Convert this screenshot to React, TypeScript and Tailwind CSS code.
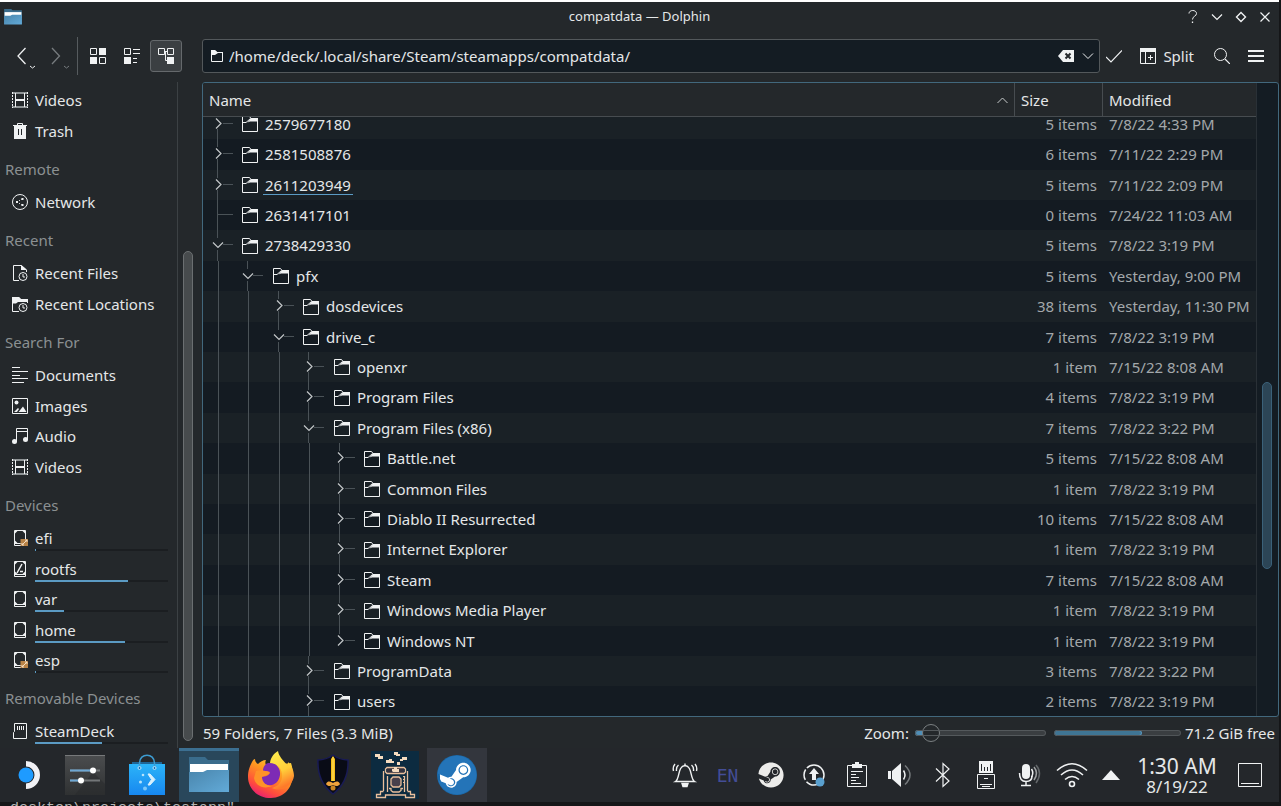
import { useLayoutEffect, useRef, type ReactNode } from "react";
import { FaSteam } from "react-icons/fa";

type Row = {
  name: string;
  level: number;
  state: "closed" | "open" | "leaf";
  size: string;
  modified: string;
  hovered?: boolean;
  last?: boolean;
};

const rows: Row[] = [
  { name: "2579677180", level: 0, state: "closed", size: "5 items", modified: "7/8/22 4:33 PM" },
  { name: "2581508876", level: 0, state: "closed", size: "6 items", modified: "7/11/22 2:29 PM" },
  { name: "2611203949", level: 0, state: "closed", size: "5 items", modified: "7/11/22 2:09 PM", hovered: true },
  { name: "2631417101", level: 0, state: "leaf", size: "0 items", modified: "7/24/22 11:03 AM" },
  { name: "2738429330", level: 0, state: "open", size: "5 items", modified: "7/8/22 3:19 PM" },
  { name: "pfx", level: 1, state: "open", size: "5 items", modified: "Yesterday, 9:00 PM" },
  { name: "dosdevices", level: 2, state: "closed", size: "38 items", modified: "Yesterday, 11:30 PM" },
  { name: "drive_c", level: 2, state: "open", size: "7 items", modified: "7/8/22 3:19 PM" },
  { name: "openxr", level: 3, state: "closed", size: "1 item", modified: "7/15/22 8:08 AM" },
  { name: "Program Files", level: 3, state: "closed", size: "4 items", modified: "7/8/22 3:19 PM" },
  { name: "Program Files (x86)", level: 3, state: "open", size: "7 items", modified: "7/8/22 3:22 PM" },
  { name: "Battle.net", level: 4, state: "closed", size: "5 items", modified: "7/15/22 8:08 AM" },
  { name: "Common Files", level: 4, state: "closed", size: "1 item", modified: "7/8/22 3:19 PM" },
  { name: "Diablo II Resurrected", level: 4, state: "closed", size: "10 items", modified: "7/15/22 8:08 AM" },
  { name: "Internet Explorer", level: 4, state: "closed", size: "1 item", modified: "7/8/22 3:19 PM" },
  { name: "Steam", level: 4, state: "closed", size: "7 items", modified: "7/15/22 8:08 AM" },
  { name: "Windows Media Player", level: 4, state: "closed", size: "1 item", modified: "7/8/22 3:19 PM" },
  { name: "Windows NT", level: 4, state: "closed", size: "1 item", modified: "7/8/22 3:19 PM", last: true },
  { name: "ProgramData", level: 3, state: "closed", size: "3 items", modified: "7/8/22 3:22 PM" },
  { name: "users", level: 3, state: "closed", size: "2 items", modified: "7/8/22 3:19 PM" },
];

/* ---------- small line icons ---------- */

function Icon({ children, size = 16 }: { children: ReactNode; size?: number }) {
  return (
    <svg width={size} height={size} viewBox={`0 0 ${size} ${size}`} fill="none" stroke="#f0f2f3" className="shrink-0" aria-hidden="true">
      {children}
    </svg>
  );
}

const FolderIcon = () => (
  <Icon>
    <path d="M.5 .5H7.5L9 2.5H15.500V15.500H.5Z" />
    <path d="M.5 6.500H4L8.500 2.500" />
    <path d="M9 2H16V5.500H8L5.500 6.500Z" fill="#f0f2f3" stroke="none" />
  </Icon>
);

const FilmIcon = () => (
  <Icon>
    <path d="M0 1H16M0 15H16" stroke="#8f9496" strokeWidth="2" />
    <path d="M.5 0V16M15.500 0V16" strokeDasharray="2 1" strokeWidth="1" />
    <path d="M3.500 1V15M12.500 1V15" />
    <path d="M3 8H13" strokeWidth="2" />
  </Icon>
);

const TrashIcon = () => (
  <Icon>
    <path d="M5.500 2.500V.5H10.500V2.500M1 2.500H15" />
    <path d="M2 3H14V16H2Z" fill="#f0f2f3" stroke="none" />
    <path d="M6.500 6V12M9.500 6V12" stroke="#24282b" />
  </Icon>
);

const NetworkIcon = () => (
  <Icon>
    <circle cx="8" cy="8" r="7.500" />
    <path d="M5 8L10 5M5 8L10 11" strokeDasharray="1 1.500" />
    <path d="M4 7h2v2H4zM9.500 4h2v2h-2zM9.500 10h2v2h-2z" fill="#f0f2f3" stroke="none" />
  </Icon>
);

const Clock = () => (
  <>
    <circle cx="11" cy="11.500" r="4" fill="#24282b" />
    <path d="M11 9V12H13" />
  </>
);

const RecentFilesIcon = () => (
  <Icon>
    <path d="M7 15.500H1.500V.5H9.500L14.500 5V7" />
    <path d="M9 0L15 5H9Z" fill="#f0f2f3" stroke="none" />
    <Clock />
  </Icon>
);

const RecentLocationsIcon = () => (
  <Icon>
    <path d="M7 15.500H.5V1.500H7L8.500 3.500H15.500V7" />
    <path d="M0 1H7L9 3H16V6H6L4 7.500H0Z" fill="#f0f2f3" stroke="none" />
    <Clock />
  </Icon>
);

const DocumentsIcon = () => (
  <Icon>
    <path d="M0 .5H8M0 4.500H16M0 8.500H8M0 11.500H16M0 15.500H12" />
  </Icon>
);

const ImagesIcon = () => (
  <Icon>
    <path d="M.5 .5H15.500V15.500H.5Z" />
    <circle cx="4.500" cy="4.500" r="2" fill="#f0f2f3" stroke="none" />
    <path d="M2 14L6 10L7 11L5 14ZM6.500 14L11 8.500L14.500 14Z" fill="#f0f2f3" stroke="none" />
  </Icon>
);

const AudioIcon = () => (
  <Icon>
    <path d="M4.500 14V.5H15.500V12M4.500 3.500H15.500" />
    <circle cx="2.500" cy="13.500" r="2.500" fill="#f0f2f3" stroke="none" />
    <circle cx="13.500" cy="11.500" r="2.500" fill="#f0f2f3" stroke="none" />
  </Icon>
);

function DriveIcon({ kind }: { kind?: "efi" | "root" }) {
  return (
    <Icon>
      <path d="M2.500 .5H13.500V15.500H2.500Z" />
      <path d="M3 13.500H13" />
      <path d="M3 1h2.500L3 3.500zM13 1h-2.500l2.500 2.500zM3 13h2.500l-2.500-2.500zM13 13h-2.500l2.500-2.500z" fill="#f0f2f3" stroke="none" />
      <path d="M6 14.500H10" stroke="#24282b" />
      {kind === "root" && <path d="M5 12L10 3M8 10.500H11" strokeWidth="1.500" />}
      {kind === "efi" && (
        <>
          <path d="M8.500 9H16V16H8.500Z" fill="#b98347" stroke="none" />
          <path d="M10 15L15 10M13 10h2v2M10 13v2h2" stroke="#f3ddc2" />
        </>
      )}
    </Icon>
  );
}

const SdIcon = () => (
  <Icon>
    <path d="M2.500 .5H14.500V15.500H1.500V9.500L2.500 8.500Z" />
    <path d="M5.500 3V7M7.500 3V7M9.500 3V7M11.500 3V7" />
  </Icon>
);

/* ---------- places sidebar ---------- */

type Place = { label: string; icon: ReactNode; used?: number };

const places: { title?: string; items: Place[] }[] = [
  { items: [{ label: "Videos", icon: <FilmIcon /> }, { label: "Trash", icon: <TrashIcon /> }] },
  { title: "Remote", items: [{ label: "Network", icon: <NetworkIcon /> }] },
  {
    title: "Recent",
    items: [
      { label: "Recent Files", icon: <RecentFilesIcon /> },
      { label: "Recent Locations", icon: <RecentLocationsIcon /> },
    ],
  },
  {
    title: "Search For",
    items: [
      { label: "Documents", icon: <DocumentsIcon /> },
      { label: "Images", icon: <ImagesIcon /> },
      { label: "Audio", icon: <AudioIcon /> },
      { label: "Videos", icon: <FilmIcon /> },
    ],
  },
  {
    title: "Devices",
    items: [
      { label: "efi", icon: <DriveIcon kind="efi" />, used: 1 },
      { label: "rootfs", icon: <DriveIcon kind="root" />, used: 70 },
      { label: "var", icon: <DriveIcon />, used: 22 },
      { label: "home", icon: <DriveIcon />, used: 68 },
      { label: "esp", icon: <DriveIcon kind="efi" />, used: 1 },
    ],
  },
  { title: "Removable Devices", items: [{ label: "SteamDeck", icon: <SdIcon />, used: 50 }] },
];

function Sidebar() {
  return (
    <aside className="flex w-[202px] shrink-0 overflow-hidden">
      <nav className="min-w-0 flex-1 border-r border-[#3c4144] pt-[3px]" aria-label="Places">
        {places.map((group, g) => (
          <section key={g}>
            {group.title && (
              <h2 className="flex h-[41px] items-center pt-[6px] pl-[5px] text-[15px] text-[#8b9092]">{group.title}</h2>
            )}
            <ul>
              {group.items.map((p, i) => (
                <li key={p.label} className={i % 2 ? "h-[31px]" : "h-[30px]"}>
                  <a href={`#${p.label}`} className="relative flex h-full items-center gap-[7px] pl-3">
                    {p.icon}
                    <span className="leading-5">{p.label}</span>
                    {p.used !== undefined && (
                      <span className="absolute right-[9px] bottom-[2px] left-[35px] h-[2px] bg-[#1b1e21]">
                        <span className="block h-full bg-[#5b9bc4]" style={{ width: `${p.used}%` }} />
                      </span>
                    )}
                  </a>
                </li>
              ))}
            </ul>
          </section>
        ))}
      </nav>
      <div className="flex w-6 shrink-0 flex-col pb-[7px] pl-[5px]">
        <div className="flex-[170] shrink-0" />
        <div className="w-[10px] flex-[489] rounded-full border border-[#6b6f71] bg-[#474b4d]" />
      </div>
    </aside>
  );
}

/* ---------- file list ---------- */

const cellWidths = ["w-[30px]", "w-[31px]", "w-[30px]", "w-[31px]", "w-[30px]"];

function TreeCell({ depth, row }: { depth: number; row: Row }) {
  const own = depth === row.level;
  return (
    <svg className={`h-full shrink-0 ${cellWidths[depth]}`} fill="none" stroke="#4a5257" aria-hidden="true">
      {!own && <path d="M15.500 -1V32" />}
      {own && (
        <>
          <path d={row.state === "leaf" ? "M14.500 -1V32M15 14.500H30" : "M14.500 -1V8"} />
          {row.state !== "leaf" && <path d={row.last ? "M20 14.500H30" : "M14.500 20V32M20 14.500H30"} />}
          {row.state === "closed" && <path d="M13 9.500L18 14.500L13 19.500" stroke="#c3c7c9" strokeWidth="1.200" />}
          {row.state === "open" && <path d="M10 12.500L15 17.500L20 12.500" stroke="#c3c7c9" strokeWidth="1.200" />}
        </>
      )}
    </svg>
  );
}

function FileList() {
  const ref = useRef<HTMLDivElement>(null);
  useLayoutEffect(() => {
    const el = ref.current;
    if (el) el.scrollTop = el.scrollHeight - el.clientHeight - 1;
  }, []);
  return (
    <div className="flex min-h-0 flex-1 overflow-hidden rounded-[3px] border border-[#42687d] bg-[#141c23]">
      <div ref={ref} className="min-w-0 flex-1 overflow-y-auto border-r border-[#293036] [scrollbar-width:none]">
        <table className="w-full table-fixed border-separate border-spacing-0">
          <colgroup>
            <col />
            <col className="w-[88px]" />
            <col className="w-[153px]" />
          </colgroup>
          <thead className="sticky top-0 z-10 bg-[#24282b] text-left">
            <tr className="h-[34px]">
              <th className="border-r border-b border-[#474c50] px-[6px] pt-[2px] pb-0 font-normal">
                <button className="flex w-full items-center justify-between">
                  Name
                  <Icon size={12}>
                    <path d="M1.500 8L6.500 3L11.500 8" stroke="#c8cccd" />
                  </Icon>
                </button>
              </th>
              <th className="border-r border-b border-[#474c50] px-[6px] pt-[2px] pb-0 font-normal">Size</th>
              <th className="border-b border-[#474c50] px-[6px] pt-[2px] pb-0 font-normal">Modified</th>
            </tr>
          </thead>
          <tbody>
            {rows.map((row, i) => (
              <tr key={row.name} className={i % 2 ? "bg-[#141b22]" : "bg-[#1a2126]"}>
                <td className="p-0">
                  <div className={`flex items-center ${i % 5 === 1 || i % 5 === 4 ? "h-[31px]" : "h-[30px]"}`}>
                    {cellWidths.slice(0, row.level + 1).map((_, d) => (
                      <TreeCell key={d} depth={d} row={row} />
                    ))}
                    <span className="ml-[9px] flex items-center gap-[5px]">
                      <FolderIcon />
                      <span className={`border-b px-[2px] leading-[18px] ${row.hovered ? "border-[#5b9bc4]" : "border-transparent"}`}>
                        {row.name}
                      </span>
                    </span>
                  </div>
                </td>
                <td className="p-0 pr-[6px] text-right text-[#a3a8ab]">{row.size}</td>
                <td className="p-0 pl-[6px] whitespace-nowrap text-[#a3a8ab]">{row.modified}</td>
              </tr>
            ))}
          </tbody>
        </table>
      </div>
      <div className="flex w-[21px] shrink-0 flex-col pl-[5px]">
        <div className="flex-[300]" />
        <div className="w-[10px] flex-[186] rounded-full border border-[#3b6179] bg-[#2c4556]" />
        <div className="flex-[147]" />
      </div>
    </div>
  );
}

/* ---------- title bar and toolbar ---------- */

function DolphinIcon({ className }: { className: string }) {
  return (
    <svg viewBox="0 0 40 36" className={className} aria-hidden="true">
      <defs>
        <linearGradient id="folderFront" x1="0" y1="0" x2="1" y2="1">
          <stop offset="0" stopColor="#4a86ad" />
          <stop offset="1" stopColor="#62aad8" />
        </linearGradient>
      </defs>
      <path d="M0 0H16L19 3H40V34H0Z" fill="#3a6c8c" />
      <path d="M1 7H39V20H1Z" fill="#fff" />
      <path d="M0 15H14L18 13H40V35H0Z" fill="url(#folderFront)" />
    </svg>
  );
}

function TitleBar() {
  return (
    <header className="flex h-[30px] items-center text-[13px]">
      <div className="flex w-[100px] pl-1">
        <DolphinIcon className="h-[16px] w-[18px]" />
      </div>
      <h1 className="flex-1 text-center">compatdata — Dolphin</h1>
      <div className="flex w-[100px] items-center justify-end gap-2 pr-[6px]">
        <button aria-label="Help">
          <Icon>
            <path d="M4 4.500C4 .5 11.500 .5 11.500 4.500C11.500 7.500 7.500 7 7.500 10.500" />
            <path d="M7.500 12.500V14" strokeWidth="1.300" />
          </Icon>
        </button>
        <button aria-label="Minimize">
          <Icon><path d="M3 5.500L8 10.500L13 5.500" strokeWidth="1.200" /></Icon>
        </button>
        <button aria-label="Restore">
          <Icon><path d="M8 3.500L12.500 8L8 12.500L3.500 8Z" strokeWidth="1.400" /></Icon>
        </button>
        <button aria-label="Close">
          <Icon><path d="M3.500 3.500L12.500 12.500M12.500 3.500L3.500 12.500" strokeWidth="1.200" /></Icon>
        </button>
      </div>
    </header>
  );
}

function Toolbar() {
  return (
    <div className="flex h-[50px] shrink-0 items-center pb-[2px]">
      <div className="flex h-[38px] w-[78px] shrink-0 items-center gap-[10px] border-r border-[#565b5e] pl-4">
        <button aria-label="Back">
          <svg width="24" height="26" fill="none" stroke="#eef0f1" aria-hidden="true">
            <path d="M9.500 5L2 13L9.500 21" strokeWidth="1.300" />
            <path d="M14 23L16.500 25L19 23" />
          </svg>
        </button>
        <button aria-label="Forward" disabled>
          <svg width="24" height="26" fill="none" stroke="#777c7f" aria-hidden="true">
            <path d="M2 5L9.500 13L2 21" strokeWidth="1.300" />
            <path d="M14 23L16.500 25L19 23" />
          </svg>
        </button>
      </div>
      <div className="flex w-[124px] shrink-0 items-center gap-[2px] pl-1">
        <button aria-label="Icons view" className="flex size-8 items-center justify-center">
          <Icon>
            <path d="M.5 .5h6v6h-6zM9.500 9.500h6v6h-6z" />
            <path d="M9 0h7v7H9zM0 9h7v7H0z" fill="#f0f2f3" stroke="none" />
          </Icon>
        </button>
        <button aria-label="Compact view" className="flex size-8 items-center justify-center">
          <Icon>
            <path d="M.5 .5h6v6h-6zM9 1.500h7M9 5.500h7M9 10.500h4M9 14.500h4" />
            <path d="M0 9h7v7H0z" fill="#f0f2f3" stroke="none" />
          </Icon>
        </button>
        <button aria-label="Details view" aria-pressed="true" className="flex size-8 items-center justify-center rounded-[3px] border border-[#65696c] bg-[#3b3f42]">
          <Icon>
            <path d="M.5 .5h6v6h-6zM9.500 .5h6v6h-6zM7 3.500H9M7.500 4V12.500H9" />
            <path d="M9 9h7v7H9z" fill="#f0f2f3" stroke="none" />
          </Icon>
        </button>
      </div>
      <div className="flex h-[34px] min-w-0 flex-1 items-center rounded-[3px] border border-[#53585b] bg-[#141c23] pr-[5px] pl-2">
        <Icon size={12}>
          <path d="M.5 .5H4L6 2.500H11.500V11.500H.5Z" />
          <path d="M0 0H4L6 2H12V3H7L4 5H0Z" fill="#f0f2f3" stroke="none" />
        </Icon>
        <input
          aria-label="Location"
          className="ml-[6px] min-w-0 flex-1 bg-transparent text-[15px] outline-none"
          defaultValue="/home/deck/.local/share/Steam/steamapps/compatdata/"
        />
        <button aria-label="Clear location">
          <Icon>
            <path d="M5 2H16V14H5L0 8Z" fill="#f0f2f3" stroke="none" />
            <path d="M7.500 5.500L12.500 10.500M12.500 5.500L7.500 10.500" stroke="#24282b" strokeWidth="2" />
          </Icon>
        </button>
        <button aria-label="Location history" className="ml-[8px]">
          <Icon size={12}><path d="M1 3.500L6 8.500L11 3.500" /></Icon>
        </button>
      </div>
      <button aria-label="Go" className="ml-[6px]">
        <Icon><path d="M0 9L5 14L16 2.500" strokeWidth="1.200" /></Icon>
      </button>
      <button className="ml-[18px] flex items-center gap-[7px]">
        <Icon>
          <path d="M.5 .5H15.500V15.500H.5ZM5.500 3V15" />
          <path d="M0 0H16V4H0Z" fill="#f0f2f3" stroke="none" />
          <path d="M10.500 7V12M8 9.500H13" />
        </Icon>
        Split
      </button>
      <button aria-label="Search" className="ml-5">
        <Icon>
          <circle cx="6.500" cy="6.500" r="6" />
          <path d="M11 11L16 16" strokeWidth="1.200" />
        </Icon>
      </button>
      <button aria-label="Menu" className="mr-[15px] ml-[18px]">
        <Icon><path d="M0 3H16M0 8H16M0 13H16" strokeWidth="2" /></Icon>
      </button>
    </div>
  );
}

function StatusBar() {
  return (
    <footer className="flex h-[31px] shrink-0 items-center pt-px pr-1 pl-px">
      <p className="flex-1">59 Folders, 7 Files (3.3 MiB)</p>
      <label htmlFor="zoom">Zoom:</label>
      <input
        id="zoom"
        type="range"
        min={0}
        max={16}
        defaultValue={1}
        className="ml-[6px] h-[18px] w-[131px] appearance-none bg-transparent [&::-webkit-slider-runnable-track]:h-[6px] [&::-webkit-slider-runnable-track]:rounded-full [&::-webkit-slider-runnable-track]:bg-[linear-gradient(to_right,#4f8fb8_12px,#3a3e41_12px)] [&::-webkit-slider-runnable-track]:outline [&::-webkit-slider-runnable-track]:-outline-offset-1 [&::-webkit-slider-runnable-track]:outline-[#54595c] [&::-webkit-slider-thumb]:mt-[-6px] [&::-webkit-slider-thumb]:size-[18px] [&::-webkit-slider-thumb]:appearance-none [&::-webkit-slider-thumb]:rounded-full [&::-webkit-slider-thumb]:border [&::-webkit-slider-thumb]:border-[#7b8082] [&::-webkit-slider-thumb]:bg-[#24282b]"
      />
      <div className="ml-2 h-[6px] w-[127px] overflow-hidden rounded-full bg-[#3a3e41] outline -outline-offset-1 outline-[#505558]">
        <div className="h-full w-[69%] rounded-full border border-[#5b9bc4] bg-[#3f7594]" />
      </div>
      <p className="ml-1">71.2 GiB free</p>
    </footer>
  );
}

/* ---------- taskbar ---------- */

const SteamOsIcon = () => (
  <svg width="24" height="30" viewBox="0 0 24 30" aria-hidden="true">
    <circle cx="8" cy="15" r="7.500" fill="#1e9bff" />
    <path d="M8 1A14 14 0 0 1 8 29V23.500A8.500 8.500 0 0 0 8 6.500Z" fill="#f1f1f5" />
  </svg>
);

const SettingsIcon = () => (
  <svg width="40" height="40" viewBox="0 0 40 40" aria-hidden="true">
    <defs>
      <linearGradient id="panel" x1="0" y1="0" x2="0" y2="1">
        <stop offset="0" stopColor="#4b4d4f" />
        <stop offset="1" stopColor="#2f3132" />
      </linearGradient>
    </defs>
    <path d="M0 0H40V40H0Z" fill="url(#panel)" />
    <path d="M10 40L28 17L40 29V40Z" fill="#282a2b" opacity=".5" />
    <path d="M0 .5H40" stroke="#77797b" />
    <path d="M5 15.500H35M5 25.500H35" stroke="#737678" strokeWidth="2" />
    <path d="M5 15.500H27M5 25.500H16" stroke="#6ea7d3" strokeWidth="2" />
    <circle cx="28" cy="15.500" r="3" fill="#fff" />
    <circle cx="16" cy="25.500" r="3" fill="#fff" />
  </svg>
);

const DiscoverIcon = () => (
  <svg width="36" height="42" viewBox="0 0 36 42" aria-hidden="true">
    <defs>
      <linearGradient id="bag" x1="0" y1="0" x2="0" y2="1">
        <stop offset="0" stopColor="#2cb4f8" />
        <stop offset="1" stopColor="#1787f0" />
      </linearGradient>
    </defs>
    <path d="M3 8H33V14H3Z" fill="#1f6596" />
    <path d="M0 10H36V41H0Z" fill="url(#bag)" />
    <path d="M10.500 14V9C10.500 -1.500 25.500 -1.500 25.500 9V14" fill="none" stroke="#3d9bd0" strokeWidth="1.500" />
    <circle cx="10.500" cy="14" r="1.500" fill="#1a6fb5" stroke="#bce6fb" />
    <circle cx="25.500" cy="14" r="1.500" fill="#1a6fb5" stroke="#bce6fb" />
    <path d="M19 20L21 20L26 25.500L21 31L19 31L22.500 25.500Z" fill="#d8f0fd" stroke="#d8f0fd" />
    <circle cx="14" cy="21" r="1.300" fill="#b8e3fb" />
    <circle cx="11.500" cy="28" r="1.500" fill="#b8e3fb" />
    <circle cx="16" cy="34.500" r="2" fill="#7cc8fa" />
  </svg>
);

const FirefoxIcon = () => (
  <svg width="46" height="48" viewBox="0 0 46 48" aria-hidden="true">
    <defs>
      <linearGradient id="fox" x1="0.800" y1="0" x2="0.200" y2="1">
        <stop offset="0" stopColor="#ffd43a" />
        <stop offset=".4" stopColor="#ff9420" />
        <stop offset=".75" stopColor="#ff4b3e" />
        <stop offset="1" stopColor="#e3157f" />
      </linearGradient>
      <linearGradient id="tail" x1="0" y1="0" x2="0.300" y2="1">
        <stop offset="0" stopColor="#fff04f" />
        <stop offset=".6" stopColor="#ffcf3a" />
        <stop offset="1" stopColor="#ff7a2a" />
      </linearGradient>
    </defs>
    <path d="M4 11C5 9 6 8 7 8C7 10 8 12 10 13C12 11 15 9 18 9C17 11 17 13 19 15L43 12C49 30 40 47 23 47C8 47 0 36 0 26C0 19 2 15 4 11Z" fill="url(#fox)" />
    <path d="M30 0C25 3 22 8 22 13C31 13 35 19 34 27C33 33 28 36 24 37C34 42 45 34 46 25C46 19 43 14 40 11V15C36 10 31 6 30 0Z" fill="url(#tail)" />
    <path d="M20 12C28 11 33 17 32 24C31 31 26 35 20 34C15 33 12 29 13 25C17 26 20 25 22 22C20 20 18 20 15 20C15 16 17 13 20 12Z" fill="#7d2bb5" />
    <path d="M8 20C13 19 18 20 22 21C20 24 16 25 14 26C14 31 18 35 24 35C15 39 7 34 6 27Z" fill="#ff9328" />
  </svg>
);

const SwordIcon = () => (
  <svg width="34" height="42" viewBox="0 0 34 42" aria-hidden="true">
    <path d="M2 6Q10 6 17 1Q24 6 32 6Q33 28 17 40Q1 28 2 6Z" fill="#090b16" stroke="#191b55" strokeWidth="1.500" />
    <path d="M15 5L17 2L19 5V27H15Z" fill="#f4bd18" />
    <path d="M17 3V27" stroke="#ffe166" />
    <path d="M10 30C12 26 15 28 17 29C19 28 22 26 24 30C22 33 19 32 17 31C15 32 12 33 10 30Z" fill="#efa23c" />
    <circle cx="17" cy="34" r="2.500" fill="#c98524" />
  </svg>
);

const BrewIcon = () => (
  <svg width="48" height="48" viewBox="0 0 48 48" aria-hidden="true">
    <path d="M0 0H48V48H0Z" fill="#0c2b40" />
    <path d="M4 3H9V5H12V8H7V6H4ZM15 9H18V8H21V10H23V12H15ZM23 1H27V3H29V5H25V4H23ZM31 6H36V9H32V10H29V8H31ZM26 11H29V14H26Z" fill="#f5dcc0" />
    <path d="M16 17H33V22H16Z" fill="#35333f" />
    <path
      d="M16 16.500H33L34.500 18V21L33 22.500H16L14.500 21V18ZM12.500 20V40M36.500 20V40M16.500 25V41M33.500 25V41M12.500 40.500H9.500V43.500H5.500V46.500H14.500V44H34.500V46.500H43.500V43.500H39.500V40.500H36.500M18 37.500H20V39.500L22 41H28L30 39.500V37.500H32"
      fill="none"
      stroke="#e9bf9c"
      strokeWidth="1.300"
    />
    <path d="M22 26H28L30 28V34L28 36H22L20 34V28Z" fill="#47404c" stroke="#e9bf9c" strokeWidth="1.300" />
    <path d="M21 20V18H23V16H26V18H28V21H22Z" fill="#f5dcc0" />
    <path d="M32.500 25V34" stroke="#e9bf9c" strokeDasharray="1 2" />
  </svg>
);

const SteamIcon = () => (
  <span className="flex size-10 items-center justify-center rounded-full bg-[radial-gradient(circle,#ffffff_60%,#1a68a8_62%)]">
    <FaSteam className="size-10 text-[#2474b8]" />
  </span>
);

const tasks: { label: string; icon: ReactNode; tone?: string }[] = [
  { label: "System Settings", icon: <SettingsIcon /> },
  { label: "Discover", icon: <DiscoverIcon /> },
  { label: "Dolphin", icon: <DolphinIcon className="h-[36px] w-[40px]" />, tone: "bg-[#29475b] border-[#3c6f91]" },
  { label: "Firefox", icon: <FirefoxIcon /> },
  { label: "Sword", icon: <SwordIcon /> },
  { label: "Brew", icon: <BrewIcon /> },
  { label: "Steam", icon: <SteamIcon />, tone: "bg-[#33363d] border-[#33363d]" },
];

function Tray({ children, label }: { children: ReactNode; label: string }) {
  return (
    <button aria-label={label} className="flex h-full w-[43px] items-center justify-center">
      {children}
    </button>
  );
}

const white = "#f0f2f3";

function Taskbar() {
  return (
    <div className="flex h-[54px] shrink-0 items-stretch bg-[#24272b]">
      <button aria-label="Application launcher" className="mr-[2px] flex w-[53px] items-center justify-center pl-[6px]">
        <SteamOsIcon />
      </button>
      <div className="flex gap-[2px]">
        {tasks.map((t) => (
          <button key={t.label} aria-label={t.label} className={`flex w-[60px] items-center justify-center border-t-[3px] pb-[3px] ${t.tone ?? "border-transparent"}`}>
            {t.icon}
          </button>
        ))}
      </div>
      <div className="ml-auto flex items-center">
        <Tray label="Notifications">
          <svg width="26" height="26" fill="none" stroke={white} strokeWidth="1.400" aria-hidden="true">
            <path d="M3.500 19.500C8 17 5.500 4 13 3.500C20.500 4 18 17 22.500 19.500ZM13 1.500V4" />
            <path d="M10 21.500H16L15 24.500H11Z" fill={white} />
            <path d="M6.500 3Q4 5 4.500 9M3 2Q.5 5 1.500 9M19.500 3Q22 5 21.500 9M23 2Q25.500 5 24.500 9" />
          </svg>
        </Tray>
        <Tray label="Keyboard layout">
          <span className="font-['DejaVu_Sans_Mono',monospace] text-[18px] text-[#434d96]">EN</span>
        </Tray>
        <Tray label="Steam">
          <FaSteam className="size-[26px] text-[#ececea]" />
        </Tray>
        <Tray label="Updates">
          <svg width="24" height="24" fill="none" stroke={white} strokeWidth="1.500" aria-hidden="true">
            <circle cx="12" cy="12" r="10" strokeDasharray="24 2 11 2" />
            <path d="M12 5L17 11H14V17H10V11H7Z" fill={white} stroke="none" />
            <circle cx="18" cy="19" r="4.500" fill="#5aa0cf" stroke="none" />
          </svg>
        </Tray>
        <Tray label="Clipboard">
          <svg width="22" height="26" fill="none" stroke={white} aria-hidden="true">
            <path d="M1.500 3.500H20.500V24.500H1.500Z" />
            <path d="M6 2H9V0H13V2H16V6H6Z" fill={white} stroke="none" />
            <path d="M5 9.500H17M5 12.500H10M5 15.500H13M5 18.500H10M5 21.500H15" />
          </svg>
        </Tray>
        <Tray label="Volume">
          <svg width="26" height="26" fill="none" stroke={white} strokeWidth="1.500" aria-hidden="true">
            <path d="M1 9H4V17H1ZM5 9L14 1V25L5 17Z" fill={white} stroke="none" />
            <path d="M16.500 8.500Q19.500 13 16.500 17.500" />
            <path d="M18 3.500Q28 13 18 22.500" stroke="#75797c" />
          </svg>
        </Tray>
        <Tray label="Bluetooth">
          <svg width="16" height="26" fill="none" stroke={white} strokeWidth="1.200" aria-hidden="true">
            <path d="M1 6.500L14 19L8 24.500V1.500L14 7L1 19.500" />
          </svg>
        </Tray>
        <Tray label="Removable devices">
          <svg width="20" height="30" fill="none" stroke={white} aria-hidden="true">
            <path d="M3 1H17V13H3Z" fill={white} stroke="none" />
            <path d="M5.500 4V11M8.500 7V11M11.500 7V11M14.500 4V11" stroke="#24272b" />
            <path d="M1.500 14.500H18.500V28.500H1.500Z" />
            <path d="M8 18.500H12M4 24.500H16M6 26.500H14" />
          </svg>
        </Tray>
        <Tray label="Microphone">
          <svg width="24" height="26" fill="none" stroke={white} strokeWidth="1.500" aria-hidden="true">
            <rect x="5" y="2" width="8" height="15" rx="4" fill={white} stroke="none" />
            <path d="M2.500 11Q2.500 19.500 9 19.500Q15 19.500 15 14M9 20V23M4 23.500H14" />
            <path d="M14.500 7Q17 11 14.500 15" />
            <path d="M17 5Q22 11 17 18" stroke="#9ea1a3" />
            <path d="M19 3Q26 11 19 21" stroke="#63676a" />
          </svg>
        </Tray>
        <Tray label="Wi-Fi">
          <svg width="32" height="26" fill="none" stroke={white} strokeWidth="1.600" aria-hidden="true">
            <path d="M1 8.500Q16 -5 31 8.500M5 13Q16 3 27 13M9 17.500Q16 11.500 23 17.500" />
            <circle cx="16" cy="22" r="2.500" />
          </svg>
        </Tray>
        <button aria-label="Show hidden icons" className="flex w-[35px] justify-center">
          <svg width="18" height="10" aria-hidden="true"><path d="M0 10L9 0L18 10Z" fill={white} /></svg>
        </button>
        <time className="flex w-[98px] flex-col items-center pt-[2px] text-center">
          <span className="text-[21px] leading-[21px]">1:30 AM</span>
          <span className="text-[17px] leading-[19px]">8/19/22</span>
        </time>
        <button aria-label="Show desktop" className="mr-[5px] flex w-12 justify-center">
          <svg width="24" height="24" fill="none" stroke={white} aria-hidden="true">
            <path d="M.5 .5H23.500V23.500H.5ZM3 20.500H21" />
          </svg>
        </button>
      </div>
    </div>
  );
}

export default function App() {
  return (
    <div className="flex h-screen min-h-[400px] flex-col overflow-hidden bg-[#151618] pr-[2px] font-['Noto_Sans',sans-serif] text-[15px] text-[#e4e7e8]">
      <div className="h-[2px] shrink-0 bg-white" />
      <main className="flex min-h-0 flex-1 flex-col bg-[#24282b]">
        <TitleBar />
        <Toolbar />
        <div className="flex min-h-0 flex-1">
          <Sidebar />
          <div className="flex min-w-0 flex-1 flex-col">
            <FileList />
            <StatusBar />
          </div>
        </div>
      </main>
      <Taskbar />
      <div className="h-1 shrink-0 overflow-hidden pl-[10px] font-['Liberation_Mono',monospace] text-[15px] leading-[14px] text-[#b5b5b5]">
        desktop\projects\testapp"
      </div>
    </div>
  );
}
